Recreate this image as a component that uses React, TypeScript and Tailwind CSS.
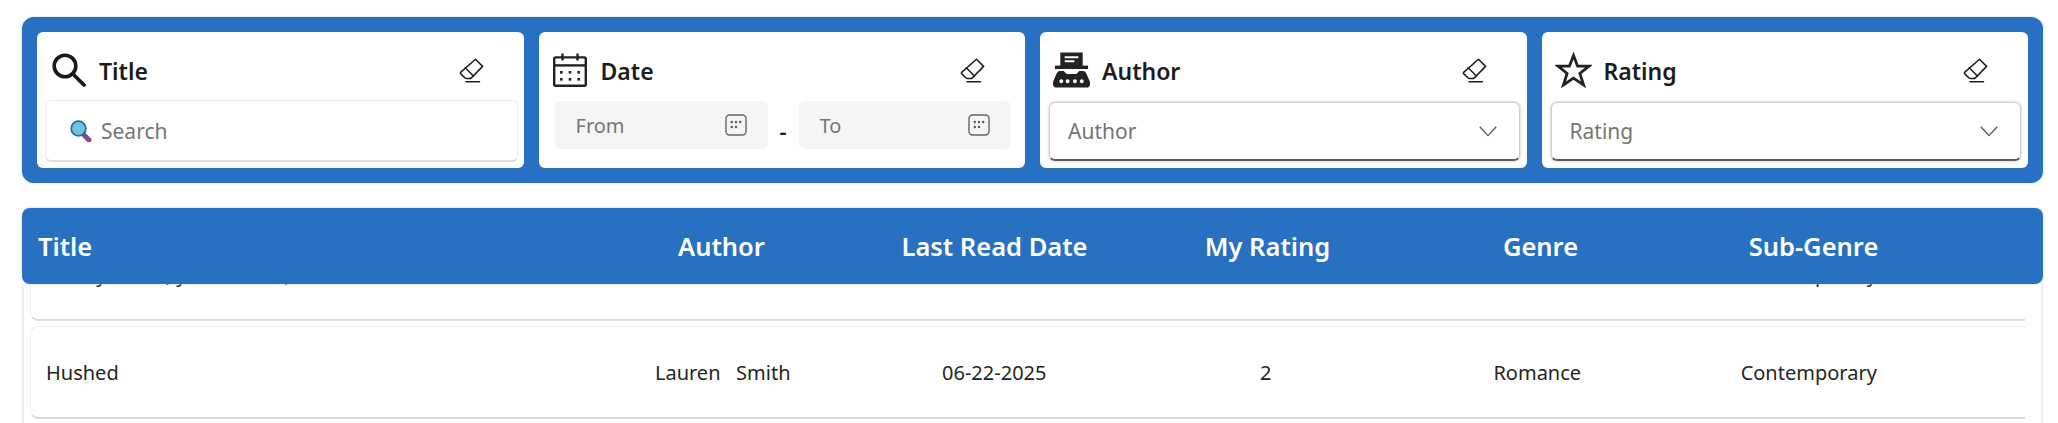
import React from 'react';

const EraserIcon = () => (
  <svg width="25" height="25" viewBox="0 0 25 25" fill="none" stroke="#1f1f1f" strokeWidth="1.5" strokeLinejoin="round" strokeLinecap="round">
    <path d="M16.5 1.2 L23.6 8.4 L12.6 19.6 Q11.6 20.6 10.4 20.6 L7.6 20.6 Q6.6 20.6 5.8 19.8 L1.8 15.9 Q1 15 1.9 14.1 Z" />
    <path d="M6.2 9.8 L14.4 18" />
    <path d="M7 23.8 H20.5" />
  </svg>
);

const SearchIcon = () => (
  <svg width="34" height="34" viewBox="0 0 34 34" fill="none" stroke="#1a1a1a" strokeWidth="3.6" strokeLinecap="round">
    <circle cx="13" cy="13" r="10.8" />
    <path d="M21 21 L32 32" strokeWidth="3.8" />
  </svg>
);

const CalendarIcon = () => (
  <svg width="34" height="34" viewBox="0 0 34 34" fill="none" stroke="#222" strokeWidth="2.4">
    <rect x="1.2" y="4.4" width="31.6" height="28.4" rx="1.5" />
    <path d="M1.2 12.4 H32.8" />
    <path d="M9.5 0.5 V7.5 M24.5 0.5 V7.5" />
    <g fill="#222" stroke="none">
      <rect x="7" y="18" width="2.6" height="2.6" />
      <rect x="15.7" y="18" width="2.6" height="2.6" />
      <rect x="24.4" y="18" width="2.6" height="2.6" />
      <rect x="7" y="25" width="2.6" height="2.6" />
      <rect x="15.7" y="25" width="2.6" height="2.6" />
      <rect x="24.4" y="25" width="2.6" height="2.6" />
    </g>
  </svg>
);

const TypewriterIcon = () => (
  <svg width="38" height="36" viewBox="0 0 38 36" fill="#222">
    <path fillRule="evenodd" d="M7.5 0 H30.5 V14 H7.5 Z M12 4 V6 H26 V4 Z M12 8 V10 H22 V8 Z" />
    <rect x="2" y="13.5" width="34" height="3.5" />
    <path
      fillRule="evenodd"
      d="M7 19 H11 L14 22 H24 L27 19 H31 Q33 19 34 21 L37.5 29 Q38 30 38 32 Q38 36 34 36 H4 Q0 36 0 32 Q0 30 0.5 29 L4 21 Q5 19 7 19 Z
         M8.5 27.5 a2 2 0 1 0 0.01 0 Z M15 27.5 a2 2 0 1 0 0.01 0 Z M22.5 27.5 a2 2 0 1 0 0.01 0 Z M29.5 27.5 a2 2 0 1 0 0.01 0 Z"
    />
  </svg>
);

const StarIcon = () => (
  <svg width="37" height="36" viewBox="0 0 37 36" fill="none" stroke="#222" strokeWidth="2.8" strokeLinejoin="miter">
    <path d="M18.5 3.5 L22.6 14.2 L34 14.2 L24.9 21.4 L28.6 33 L18.5 26.2 L8.4 33 L12.1 21.4 L3 14.2 L14.4 14.2 Z" />
  </svg>
);

const MiniCalendar = () => (
  <svg width="22" height="22" viewBox="0 0 22 22" fill="none" stroke="#666" strokeWidth="1.4">
    <rect x="1" y="1" width="20" height="20" rx="3.5" />
    <g fill="#555" stroke="none">
      <circle cx="6.8" cy="8" r="1.2" />
      <circle cx="11" cy="8" r="1.2" />
      <circle cx="15.2" cy="8" r="1.2" />
      <circle cx="6.8" cy="13" r="1.2" />
      <circle cx="11" cy="13" r="1.2" />
    </g>
  </svg>
);

const LensIcon = () => (
  <svg width="22" height="22" viewBox="0 0 22 22">
    <path d="M13 14 L19 20" stroke="#7b4a93" strokeWidth="5" strokeLinecap="round" />
    <circle cx="8.5" cy="8.5" r="7.3" fill="#6cc5e8" stroke="#2f6d8f" strokeWidth="1.8" />
  </svg>
);

const Chevron = () => (
  <svg width="18" height="11" viewBox="0 0 18 11" fill="none" stroke="#555" strokeWidth="1.3">
    <path d="M0.8 0.8 L9 9.6 L17.2 0.8" />
  </svg>
);

interface FilterCardProps {
  icon: React.ReactNode;
  label: string;
  children: React.ReactNode;
}

const FilterCard: React.FC<FilterCardProps> = ({ icon, label, children }) => (
  <div className="h-[136px] rounded-md bg-white">
    <div className="flex h-[68px] items-center justify-between pl-[13px] pr-[40px] pt-[8px]">
      <div className="flex items-center gap-[12px]">
        <div className="flex w-[37px] justify-center">{icon}</div>
        <span className="pt-[2px] text-[23px] font-semibold text-[#1c1c1c]">{label}</span>
      </div>
      <EraserIcon />
    </div>
    {children}
  </div>
);

const DateField = ({ label, className }: { label: string; className: string }) => (
  <div className={`flex h-[48px] items-center justify-between rounded-md bg-[#f5f5f5] pl-[21px] pr-[21px] text-[20px] text-[#757575] ${className}`}>
    <span className="pt-[2px]">{label}</span>
    <MiniCalendar />
  </div>
);

const SelectField = ({ label }: { label: string }) => (
  <div className="ml-[9px] mr-[7px] mt-[2px] flex h-[59px] items-center justify-between rounded-md border border-[#cfcfcf] border-b-2 border-b-[#5c5c5c] pl-[18px] pr-[22px] text-[21px] text-[#757575] shadow-[0_0_3px_rgba(0,0,0,0.25)]">
    <span className="pt-[2px]">{label}</span>
    <Chevron />
  </div>
);

const COLUMNS = ['Author', 'Last Read Date', 'My Rating', 'Genre', 'Sub-Genre'];

const ROWS = [
  ['Dowry of Ink, yet No Lore,', '', '', '', '', 'Contemporary'],
  ['Hushed', 'Lauren   Smith', '06-22-2025', '2', 'Romance', 'Contemporary'],
];

export default function App() {
  return (
    <div className="h-[423px] overflow-hidden bg-white pl-[22px] pr-[15px] pt-[17px] [font-family:'Noto_Sans',sans-serif]">
      {/* Filters */}
      <div className="grid grid-cols-4 gap-[15px] rounded-xl bg-[#2870c2] p-[15px] shadow-[0_0_2px_#a9cdf3]">
        <FilterCard icon={<SearchIcon />} label="Title">
          <div className="ml-[8px] mr-[6px] flex h-[62px] items-center gap-[9px] rounded-md border border-[#eeeeee] border-b-2 border-b-[#dddddd] pl-[24px] text-[21px] text-[#757575]">
            <LensIcon />
            <span className="pt-[2px]">Search</span>
          </div>
        </FilterCard>
        <FilterCard icon={<CalendarIcon />} label="Date">
          <div className="ml-[16px] mr-[14px] mt-[1px] flex items-center">
            <DateField label="From" className="w-[213px]" />
            <span className="w-[31px] pt-[12px] text-center text-[22px] font-semibold text-[#222]">-</span>
            <DateField label="To" className="flex-1" />
          </div>
        </FilterCard>
        <FilterCard icon={<TypewriterIcon />} label="Author">
          <SelectField label="Author" />
        </FilterCard>
        <FilterCard icon={<StarIcon />} label="Rating">
          <SelectField label="Rating" />
        </FilterCard>
      </div>

      {/* Books table */}
      <div className="mt-[25px]">
        <div className="relative z-10 grid h-[76px] grid-cols-[563px_repeat(5,273px)] items-center rounded-lg bg-[#2870c2] text-[25.5px] font-semibold text-white shadow-[0_0_2px_#a9cdf3]">
          <span className="pl-[16px]">Title</span>
          {COLUMNS.map((col) => (
            <span key={col} className="text-center">{col}</span>
          ))}
        </div>
        <div className="flex h-[139px] flex-col justify-end gap-[5px] overflow-hidden border-x-2 border-[#eeeeee] pb-[4px] pl-[6px] pr-[16px]">
          {ROWS.map((row, i) => (
            <div
              key={i}
              className="grid h-[93px] shrink-0 grid-cols-[556px_repeat(5,271.5px)] items-center rounded-l-lg border border-r-0 border-[#f0f0f0] border-b-2 border-b-[#dddddd] pt-[1px] text-[20px] text-[#252525]"
            >
              <span className="pl-[15px]">{row[0]}</span>
              {row.slice(1).map((cell, j) => (
                <span key={j} className="whitespace-pre text-center">{cell}</span>
              ))}
            </div>
          ))}
        </div>
      </div>
    </div>
  );
}
